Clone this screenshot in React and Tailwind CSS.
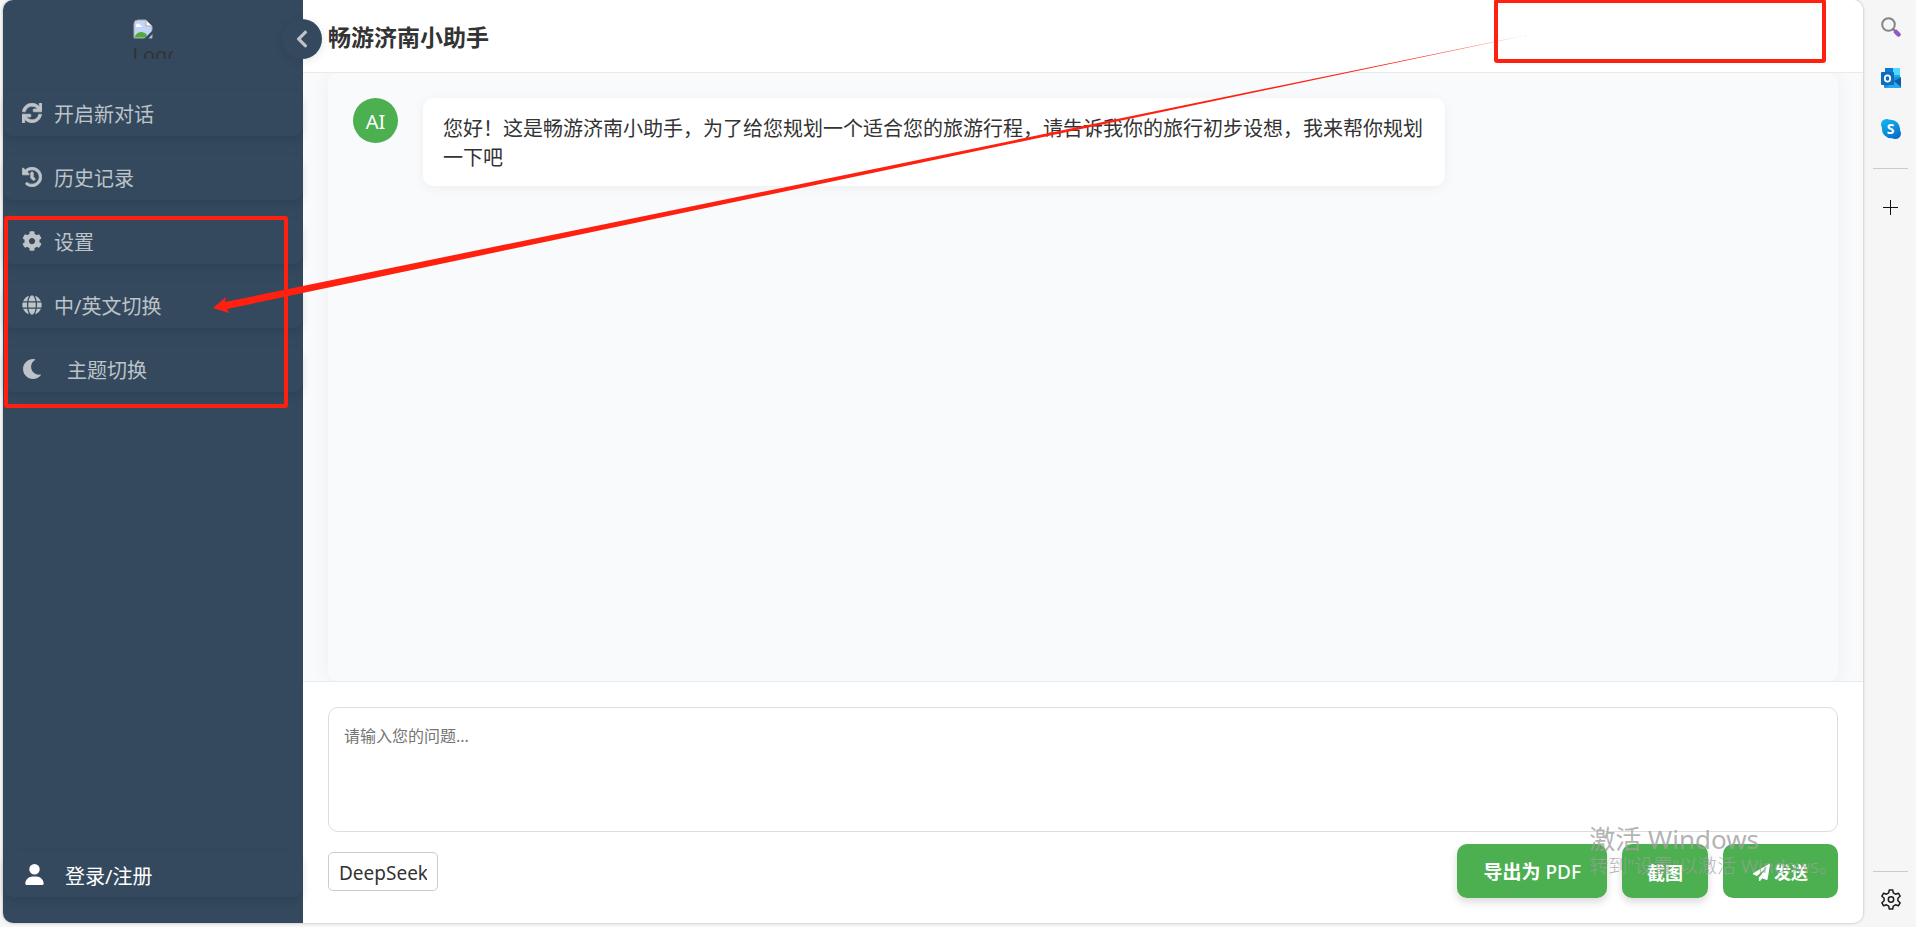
import { useState } from "react";
import {
  FaSync,
  FaHistory,
  FaCog,
  FaGlobe,
  FaMoon,
  FaPaperPlane,
  FaChevronLeft,
} from "react-icons/fa";
import { FaUser } from "react-icons/fa6";

const menuItems = [
  { key: "new", label: "开启新对话", icon: FaSync, bold: true },
  { key: "history", label: "历史记录", icon: FaHistory, bold: true },
  { key: "settings", label: "设置", icon: FaCog },
  { key: "language", label: "中/英文切换", icon: FaGlobe },
  { key: "theme", label: "主题切换", icon: FaMoon, indent: true },
];

function BrokenLogo() {
  return (
    <div className="h-10 w-10 overflow-hidden text-xl leading-8 text-[#333]">
      <svg viewBox="0 0 20 20" className="block h-5 w-5">
        <path d="M1 5a4 4 0 0 1 4-4h8l6 6v12H1z" fill="#c2d5f8" stroke="#a9a9a9" />
        <path d="M3 7a2 2 0 0 1 4-1 2 2 0 0 1 2 2H3z" fill="#fff" />
        <path d="M1.500 18.500C3 13 8 11 13.500 15v3.500z" fill="#53a93a" />
        <path d="M11 20L20 11v3.500L15 20z" fill="#34495e" />
        <path d="M13 1v6h6z" fill="#fff" stroke="#a9a9a9" />
      </svg>
      <span className="block">Logo</span>
    </div>
  );
}

function Sidebar({ onToggle }) {
  return (
    <aside className="relative z-10 flex w-[300px] shrink-0 flex-col rounded-l-[10px] bg-[#34495e] pt-[19px] pb-[26px]">
      <div className="flex justify-center pr-px">
        <BrokenLogo />
      </div>
      <button
        type="button"
        aria-label="收起侧边栏"
        onClick={onToggle}
        className="absolute top-[19px] -right-[19px] flex h-10 w-10 items-center justify-center rounded-full bg-[#34495e] text-[#bdc3c7] shadow-[0_2px_10px_rgba(0,0,0,0.1)]"
      >
        <FaChevronLeft className="h-5 w-5" />
      </button>

      <nav className="mt-[32px] flex flex-col gap-[19px]">
        {menuItems.map(({ key, label, icon: Icon, bold, indent }) => (
          <button
            key={key}
            type="button"
            className="flex h-[45px] w-full items-center rounded-[10px] pl-[19px] text-xl text-[#bdc3c7] shadow-[0_4px_8px_rgba(0,0,0,0.1)]"
          >
            <Icon className={bold ? "mb-[2px] h-5 w-5 stroke-[20px]" : "mb-[2px] h-5 w-5"} />
            <span className={indent ? "ml-[25px] pt-[2px]" : "ml-3 pt-[2px]"}>{label}</span>
          </button>
        ))}
      </nav>

      <button
        type="button"
        className="mt-auto flex h-[45px] w-full items-center rounded-[10px] pl-[21px] text-xl text-white shadow-[0_4px_8px_rgba(0,0,0,0.1)]"
      >
        <FaUser className="h-[21px] w-[21px]" />
        <span className="ml-5 pt-1">登录/注册</span>
      </button>
    </aside>
  );
}

function ChatArea() {
  return (
    <div className="flex flex-1 bg-[#f9fafc] px-[25px]">
      <div className="flex flex-1 items-start rounded-[10px] p-[25px] shadow-[0_0_20px_rgba(0,0,0,0.05)] [clip-path:inset(0_-25px)]">
        <div className="flex h-[45px] w-[45px] shrink-0 items-center justify-center rounded-full bg-[#4caf50] pt-[2px] text-xl text-white">
          AI
        </div>
        <p className="ml-[25px] max-w-[70%] rounded-[10px] bg-white px-5 pt-4 pb-[14px] text-xl leading-[29px] text-[#333] shadow-[0_2px_12px_rgba(0,0,0,0.05)]">
          您好！这是畅游济南小助手，为了给您规划一个适合您的旅游行程，请告诉我你的旅行初步设想，我来帮你规划一下吧
        </p>
      </div>
    </div>
  );
}

function Composer() {
  const [question, setQuestion] = useState("");
  const buttonClass =
    "flex h-[54px] items-center rounded-[10px] bg-[#4caf50] pt-[3px] font-bold text-white";

  return (
    <form
      onSubmit={(e) => e.preventDefault()}
      className="border-t border-[#e8eaec] bg-white px-[25px] pt-[25px] pb-[25px]"
    >
      <textarea
        aria-label="请输入您的问题"
        placeholder="请输入您的问题..."
        value={question}
        onChange={(e) => setQuestion(e.target.value)}
        className="block h-[125px] w-full resize-none rounded-[10px] border border-[#ddd] px-[15px] py-[15px] text-base leading-[26px] text-[#333] outline-none placeholder:text-[#757575]"
      />
      <div className="mt-3 flex items-center gap-[15px]">
        <select
          aria-label="模型"
          className="mr-auto h-[39px] w-[110px] appearance-none rounded-[5px] border border-[#ccc] bg-white px-[10px] pt-1 text-[19px] text-[#333]"
        >
          <option>DeepSeek</option>
        </select>
        <button
          type="button"
          className={`${buttonClass} gap-[5px] px-[26px] text-[19px] shadow-[0_4px_8px_rgba(0,0,0,0.15)]`}
        >
          导出为 <span className="font-medium">PDF</span>
        </button>
        <button
          type="button"
          className={`${buttonClass} px-[25px] text-lg shadow-[0_4px_8px_rgba(0,0,0,0.15)]`}
        >
          截图
        </button>
        <button type="submit" className={`${buttonClass} gap-1 px-[30px] text-[17px]`}>
          <FaPaperPlane className="h-[17px] w-[17px]" />
          发送
        </button>
      </div>
    </form>
  );
}

function SearchIcon() {
  return (
    <svg viewBox="0 0 20 20" className="h-5 w-5">
      <circle cx="7.500" cy="7.500" r="6.300" fill="#f3f5f7" stroke="#858585" strokeWidth="2" />
      <path d="M12 12l2.500 2.500" stroke="#777" strokeWidth="2" />
      <path d="M15 15l2.500 2.500" stroke="#8c5cc4" strokeWidth="4.500" strokeLinecap="round" />
    </svg>
  );
}

function OutlookIcon() {
  return (
    <svg viewBox="0 0 20 20" className="h-5 w-5">
      <rect x="4" width="15" height="13" rx="1" fill="#28a8ea" />
      <path d="M12 0h6a1 1 0 0 1 1 1v6h-7z" fill="#50d9ff" />
      <path d="M4 0h8v7H4z" fill="#0f78d4" />
      <path d="M3 10l17-1v10a1 1 0 0 1-1 1H4a1 1 0 0 1-1-1z" fill="#1490df" />
      <path d="M20 10v9.500l-1 .5H4z" fill="#28a8ea" />
      <path d="M20 9.500v9.500l-7-6z" fill="#0a5ea8" />
      <rect y="4" width="13" height="13" rx="1" fill="#0f6cbd" />
      <ellipse cx="6.500" cy="10.500" rx="2.700" ry="3.200" fill="none" stroke="#fff" strokeWidth="1.800" />
    </svg>
  );
}

function SkypeIcon() {
  return (
    <span className="relative flex h-5 w-5 items-center justify-center text-sm font-bold text-white">
      <svg viewBox="0 0 20 20" className="absolute inset-0 h-5 w-5">
        <defs>
          <linearGradient id="skype" gradientUnits="userSpaceOnUse" x1="4" y1="0" x2="14" y2="20">
            <stop offset="0" stopColor="#12b5ee" />
            <stop offset="1" stopColor="#0a6ecb" />
          </linearGradient>
        </defs>
        <path
          d="M5.500 0C7 0 8 .7 9 .8a9.200 9.200 0 0 1 10 10c.2 1.200 1 2 1 3.700a5.500 5.500 0 0 1-5.500 5.500c-1.500 0-2.500-.7-3.500-.8a9.200 9.200 0 0 1-10-10C.8 8 0 7 0 5.500A5.500 5.500 0 0 1 5.500 0z"
          fill="url(#skype)"
        />
      </svg>
      <span className="relative leading-5">S</span>
    </span>
  );
}

function GearIcon() {
  return (
    <svg viewBox="0 0 22 22" className="h-[22px] w-[22px]" fill="none" stroke="#1b1b1b" strokeWidth="1.500" strokeLinejoin="round">
      <path d="M9.300 1h3.400l.6 2.900 2.200 1.300 2.900-1 1.700 3-2.200 2v2.600l2.200 2-1.700 3-2.900-1-2.200 1.300-.6 2.900H9.300l-.6-2.900-2.200-1.300-2.900 1-1.700-3 2.200-2V9.200l-2.200-2 1.700-3 2.900 1 2.200-1.300z" />
      <circle cx="11" cy="10.500" r="2.700" />
    </svg>
  );
}

function BrowserRail() {
  return (
    <aside className="flex w-[53px] shrink-0 flex-col items-center pt-[17px] pb-4 pl-[2px]">
      <div className="flex flex-col gap-[31px]">
        <button type="button" aria-label="搜索" className="block">
          <SearchIcon />
        </button>
        <button type="button" aria-label="Outlook" className="block">
          <OutlookIcon />
        </button>
        <button type="button" aria-label="Skype" className="block">
          <SkypeIcon />
        </button>
      </div>
      <hr className="mt-[29px] w-[35px] border-[#ccc]" />
      <button type="button" aria-label="添加" className="mt-[31px] block">
        <svg viewBox="0 0 15 15" className="h-[15px] w-[15px]" stroke="#111">
          <path d="M0 7.500h15M7.500 0v15" />
        </svg>
      </button>
      <hr className="mt-auto w-[35px] border-[#ccc]" />
      <button type="button" aria-label="浏览器设置" className="mt-[17px] block">
        <GearIcon />
      </button>
    </aside>
  );
}

// Red boxes and the arrow drawn over the page
function Annotations() {
  return (
    <div className="pointer-events-none absolute inset-0 z-20">
      <div className="absolute top-[216px] left-1 h-[192px] w-[284px] rounded-[3px] border-4 border-[#ff2010]" />
      <div className="absolute -top-px left-[1494px] h-16 w-[332px] rounded-[3px] border-4 border-[#ff2010]" />
      <svg width="1540" height="320" className="absolute top-0 left-0">
        <path
          d="M213 308L226 297L225 302L1527 35L227 309L229 313Z"
          fill="#ff2010"
        />
      </svg>
    </div>
  );
}

function Watermark() {
  return (
    <div className="pointer-events-none absolute right-[78px] bottom-[48px] z-20 text-[#a0a0a0]/80">
      <p className="text-[26px] leading-[30px]">激活 Windows</p>
      <p className="text-[19px] leading-[25px] font-light">转到"设置"以激活 Windows。</p>
    </div>
  );
}

export default function App() {
  const [open, setOpen] = useState(true);

  return (
    <div className="relative flex min-h-screen overflow-hidden bg-[#f6f6f6] font-['Noto_Sans','Noto_Sans_CJK_SC',sans-serif]">
      <div className="mb-1 ml-[3px] flex flex-1 rounded-[10px] bg-white shadow-[0_0_3px_rgba(0,0,0,0.3)]">
        {open && <Sidebar onToggle={() => setOpen(false)} />}
        <main className="flex min-w-0 flex-1 flex-col overflow-hidden rounded-r-[10px]">
          <header className="flex h-[73px] items-center border-b border-[#e8eaec] bg-white px-[25px] pt-[2px]">
            <h1 className="text-[23px] font-bold text-[#333]">畅游济南小助手</h1>
          </header>
          <ChatArea />
          <Composer />
        </main>
      </div>
      <BrowserRail />
      <Annotations />
      <Watermark />
    </div>
  );
}
